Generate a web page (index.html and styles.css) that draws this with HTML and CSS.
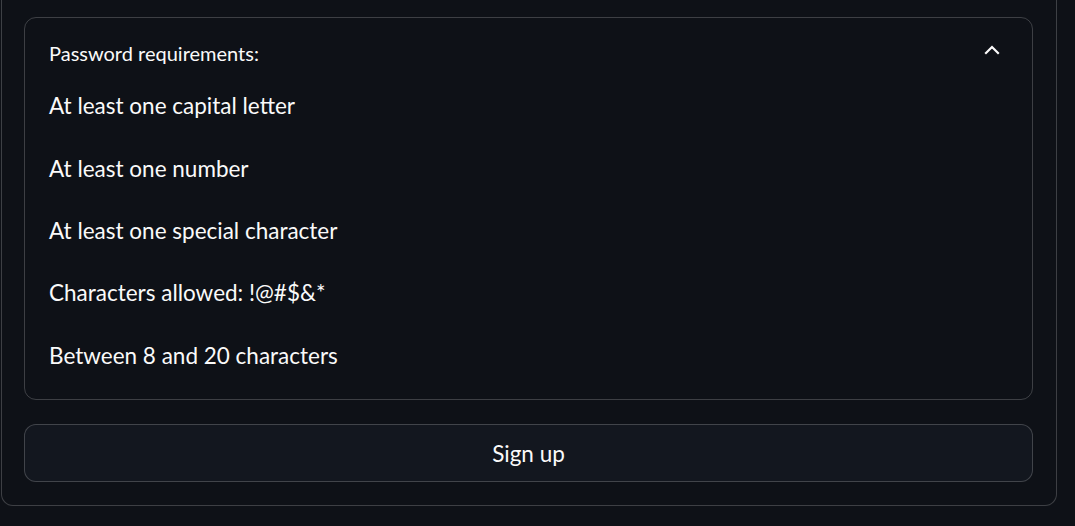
FILE: index.html
```html
<!DOCTYPE html>
<html lang="en">
<head>
<meta charset="utf-8">
<title>Sign up</title>
<link rel="stylesheet" href="styles.css">
</head>
<body>
<form class="form">
  <details class="expander" open>
    <summary class="summary">
      <span class="summary-label">Password requirements:</span>
      <svg class="chevron" width="24" height="24" viewBox="0 0 24 24" aria-hidden="true">
        <path d="M6 15l6-6 6 6" fill="none" stroke="#fafafa" stroke-width="2.2" stroke-linecap="square" stroke-linejoin="miter"/>
      </svg>
    </summary>
    <div class="content">
      <p class="item">At least one capital letter</p>
      <p class="item">At least one number</p>
      <p class="item">At least one special character</p>
      <p class="item">Characters allowed: !@#$&amp;*</p>
      <p class="item">Between 8 and 20 characters</p>
    </div>
  </details>
  <button type="button" class="button">Sign up</button>
</form>
</body>
</html>
```
FILE: styles.css
```css
html, body {
  margin: 0;
  padding: 0;
  background: #0e1117;
  color: #fafafa;
  font-family: Lato, "Liberation Sans", sans-serif;
}
body {
  height: 526px;
  overflow: hidden;
}
.form {
  box-sizing: border-box;
  width: 1056px;
  margin-left: 1px;
  padding: 17px 23px 23px 22px;
  border: 1px solid rgba(250, 250, 250, 0.2);
  border-top: none;
  border-radius: 0 0 12px 12px;
  display: flex;
  flex-direction: column;
  gap: 24px;
}
.expander {
  border: 1px solid rgba(250, 250, 250, 0.2);
  border-radius: 12px;
}
.summary {
  list-style: none;
  display: flex;
  justify-content: space-between;
  align-items: flex-start;
  padding: 19px 28px 16.5px 24px;
  cursor: pointer;
}
.summary::-webkit-details-marker {
  display: none;
}
.summary-label {
  font-size: 20px;
  line-height: 33.6px;
}
.chevron {
  margin-top: 0.8px;
  flex: none;
}
.content {
  display: flex;
  flex-direction: column;
  gap: 24px;
  padding: 0 24px 24px;
}
.item {
  margin: 0;
  font-size: 22.5px;
  line-height: 38.4px;
}
.button {
  box-sizing: border-box;
  height: 58px;
  width: 100%;
  display: flex;
  align-items: center;
  justify-content: center;
  background: #13171f;
  color: #fafafa;
  border: 1px solid rgba(250, 250, 250, 0.2);
  border-radius: 12px;
  font-family: Lato, "Liberation Sans", sans-serif;
  font-size: 22.5px;
  padding: 0;
}
```
